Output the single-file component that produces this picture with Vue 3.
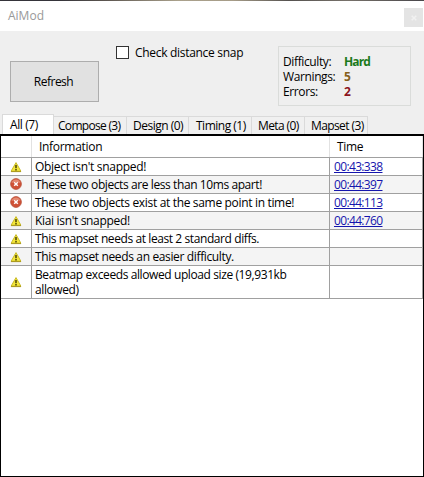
<script setup>
const tabs = [
  { label: 'All (7)', cls: 'active' },
  { label: 'Compose (3)', cls: 'compose' },
  { label: 'Design (0)', cls: 'design' },
  { label: 'Timing (1)', cls: 'timing' },
  { label: 'Meta (0)', cls: 'meta' },
  { label: 'Mapset (3)', cls: 'mapset' },
]
// tracking: per-message letter spacing in px
const rows = [
  { type: 'warning', text: "Object isn't snapped!", time: '00:43:338', tracking: -0.3 },
  { type: 'error', text: 'These two objects are less than 10ms apart!', time: '00:44:397', tracking: -0.41 },
  { type: 'error', text: 'These two objects exist at the same point in time!', time: '00:44:113', tracking: -0.33 },
  { type: 'warning', text: "Kiai isn't snapped!", time: '00:44:760', tracking: -0.33 },
  { type: 'warning', text: 'This mapset needs at least 2 standard diffs.', time: '', tracking: -0.41 },
  { type: 'warning', text: 'This mapset needs an easier difficulty.', time: '', tracking: -0.36 },
  { type: 'warning', text: 'Beatmap exceeds allowed upload size (19,931kb allowed)', time: '', tracking: -0.4 },
]
</script>

<template>
  <div class="window">
    <div class="backdrop"></div>
    <header class="titlebar">
      <span class="title">AiMod</span>
      <button class="close" aria-label="Close">
        <svg width="6" height="6" viewBox="0 0 6 6"><path d="M.7.7 5.3 5.3M5.3.7.7 5.3" stroke="#f1f1f1" stroke-width="1.5" /></svg>
      </button>
    </header>
    <section class="controls">
      <button class="refresh">Refresh</button>
      <label class="check"><span class="box"></span><span class="check-text">Check distance snap</span></label>
      <div class="stats">
        <span>Difficulty:</span><b class="hard">Hard</b>
        <span>Warnings:</span><b class="warn">5</b>
        <span>Errors:</span><b class="err">2</b>
      </div>
    </section>
    <nav class="tabs">
      <div v-for="t in tabs" :key="t.label" class="tab" :class="t.cls">{{ t.label }}</div>
    </nav>
    <main class="list">
      <div class="row head"><div></div><div>Information</div><div>Time</div></div>
      <div v-for="(r, i) in rows" :key="i" class="row" :class="{ alt: i % 2 }">
        <div class="icon" :class="r.type">
          <svg v-if="r.type === 'warning'" width="12" height="12" viewBox="0 0 12 12">
            <path d="M6 1.6 10.9 10.2H1.1Z" fill="#f5e83a" stroke="#c9bb2a" stroke-width="1" stroke-linejoin="round" />
            <path d="M1 10.6H11" stroke="#a8951c" stroke-width="1" />
            <path d="M6 4V7.2M6 8.1V9.5" stroke="#3c3500" stroke-width="1.4" />
          </svg>
          <svg v-else width="12" height="12" viewBox="0 0 12 12">
            <circle cx="6" cy="6" r="5.4" fill="#cf5136" stroke="#b9503a" stroke-width=".8" />
            <path d="M1.6 5A4.5 4.5 0 0 1 10.4 5Q6 3.2 1.6 5" fill="#e48a72" />
            <path d="M4.2 4.2 7.8 7.8M7.8 4.2 4.2 7.8" stroke="#fff" stroke-width="1.5" />
          </svg>
        </div>
        <div class="info" :style="{ letterSpacing: r.tracking + 'px' }">{{ r.text }}</div>
        <div class="time"><a v-if="r.time">{{ r.time }}</a></div>
      </div>
    </main>
  </div>
</template>

<style>
body { margin: 0; overflow: hidden; }
</style>

<style scoped>
* { box-sizing: border-box; }
.window {
  width: 424px; height: 477px; display: flex; flex-direction: column;
  background: #efefef; color: #000;
  font: 12px/15px "Open Sans", "Noto Sans", sans-serif; letter-spacing: -0.3px;
}
.backdrop { height: 1px; flex: none; background: linear-gradient(90deg, #35343a 0 14%, #5c5650 25%, #aaa18c 42%, #a69c88 55%, #55524f 68%, #77716a 82%, #48464a); }
.titlebar { height: 30px; flex: none; background: #fff; display: flex; justify-content: space-between; padding: 7px 1px 0 8px; }
.title { color: #999; line-height: 16px; letter-spacing: 0; }
.close { width: 19px; height: 19px; border: 0; padding: 0; background: #e4e4e4; display: flex; align-items: center; justify-content: center; }
.controls { height: 83px; flex: none; display: flex; align-items: flex-start; padding: 15px 0 0 10px; }
.refresh { width: 89px; height: 41px; margin-top: 15px; padding: 0 2px 0 0; font: inherit; letter-spacing: -0.5px; color: #000; background: #e1e1e1; border: 1px solid #adadad; }
.check { display: flex; align-items: center; gap: 6px; margin-left: 17px; height: 13px; width: 162px; white-space: nowrap; }
.box { width: 13px; height: 13px; flex: none; border: 1px solid #333; background: #fff; }
.stats { width: 133px; height: 60px; border: 1px solid #dadcda; display: grid; grid-template-columns: 61px 1fr; grid-auto-rows: 15px; padding: 7px 0 0 4px; letter-spacing: -0.38px; }
.stats b { letter-spacing: -0.9px; }
.hard { color: #1b7a1b; }
.warn { color: #86601c; }
.err { color: #8b1520; }
.tabs { height: 20px; flex: none; display: flex; align-items: flex-end; padding-left: 2px; white-space: nowrap; letter-spacing: -0.6px; }
.tab { height: 18px; padding: 1px 0 0 5px; border: 1px solid #dadada; border-width: 1px 1px 0 0; background: #f0f0f0; }
.active { width: 52px; height: 20px; padding: 2px 0 0 7px; background: #fff; border-left-width: 1px; letter-spacing: -0.4px; }
.compose { width: 73px; padding-left: 4px; letter-spacing: -0.7px; }
.design { width: 62px; padding-left: 6px; letter-spacing: -0.5px; }
.timing { width: 63px; padding-left: 7px; letter-spacing: -0.5px; }
.meta { width: 53px; padding-left: 6px; }
.mapset { width: 63px; padding-left: 6px; }
.list { flex: 1; border: 1px solid #000; border-top-width: 2px; background: #fff; }
.row { display: grid; grid-template-columns: 31px 298px 1fr; min-height: 18px; border-bottom: 1px solid #a0a0a0; }
.row > div { border-right: 1px solid #a0a0a0; padding: 1px 0 0 3px; }
.row.alt { background: #f4f4f4; }
.row.head { height: 22px; }
.row.head > div { border-color: #e2e2e2; padding: 3px 0 0 7px; }
.row > .icon { display: flex; align-items: center; justify-content: center; padding: 0; }
.row > .icon.error { padding-bottom: 2px; }
.row:last-child { height: 33px; }
.row > .time { padding-left: 4px; letter-spacing: -0.65px; }
.time a { color: #1515ad; text-decoration: underline; }
</style>
